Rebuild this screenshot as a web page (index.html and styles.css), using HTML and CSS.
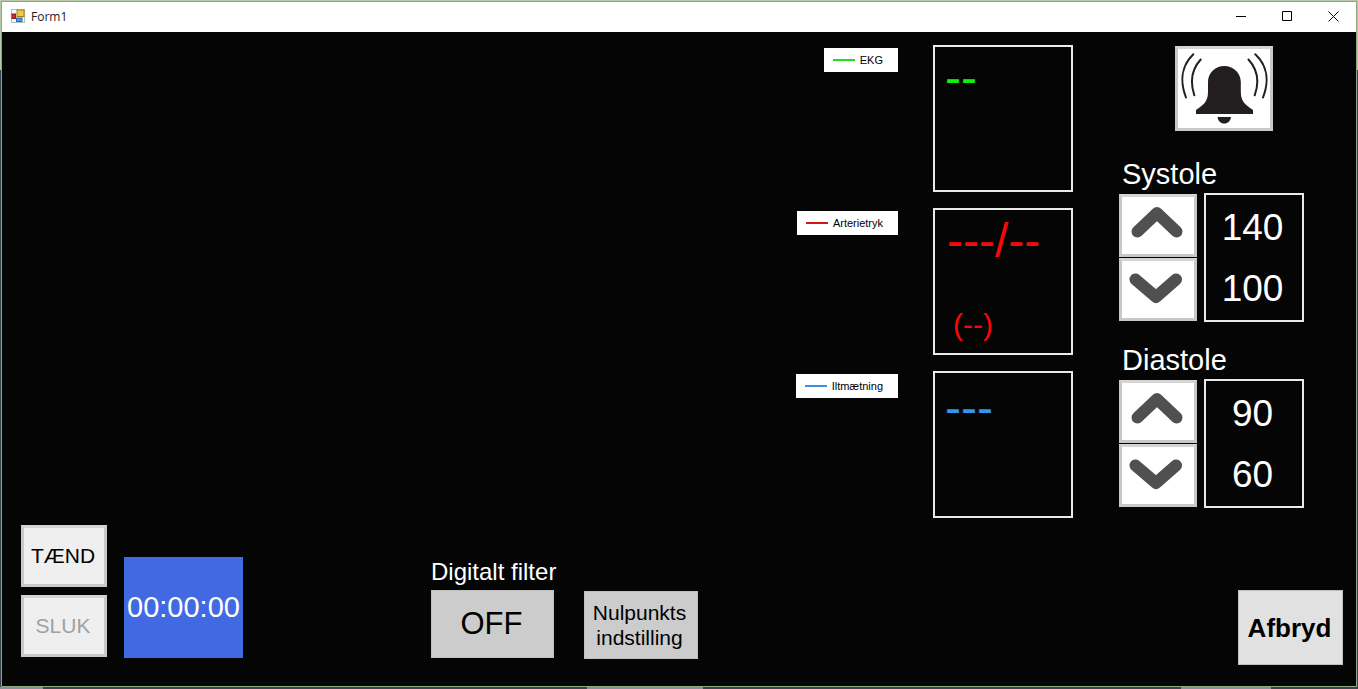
FILE: index.html
```html
<!DOCTYPE html>
<html lang="da">
<head>
<meta charset="utf-8">
<title>Form1</title>
<link rel="stylesheet" href="styles.css">
</head>
<body>
<div class="window">
  <header class="titlebar">
    <svg class="app-icon" viewBox="0 0 14 14" aria-hidden="true">
      <rect x="0.5" y="0.5" width="13" height="13" fill="#f4f8fa" stroke="#a9c0cb"/>
      <rect x="1" y="5" width="3.500" height="4.500" fill="#c8342f" stroke="#8c1a1a"/>
      <rect x="6" y="1" width="7" height="6.500" fill="#f5cb45" stroke="#a97c17"/>
      <rect x="5.500" y="9" width="5.500" height="3.500" fill="#5b95dc" stroke="#3568ad"/>
    </svg>
    <h1 class="title">Form1</h1>
    <div class="window-buttons">
      <button class="window-button" aria-label="Minimer"><svg viewBox="0 0 11 11"><path d="M0 5.500H10"/></svg></button>
      <button class="window-button" aria-label="Maksimer"><svg viewBox="0 0 11 11"><path d="M0.500 0.500H9.500V9.500H0.500Z"/></svg></button>
      <button class="window-button" aria-label="Luk"><svg viewBox="0 0 11 11"><path d="M0.500 0.500L10.500 10.500M10.500 0.500L0.500 10.500"/></svg></button>
    </div>
  </header>

  <main class="client">
    <div class="monitor">
      <div class="signals">
        <section class="signal ekg">
          <div class="legend"><span class="swatch"></span>EKG</div>
          <div class="reading"><span class="value">--</span></div>
        </section>
        <section class="signal pressure">
          <div class="legend"><span class="swatch"></span>Arterietryk</div>
          <div class="reading"><span class="value">---/--</span><span class="mean">(--)</span></div>
        </section>
        <section class="signal oxygen">
          <div class="legend"><span class="swatch"></span>Iltmætning</div>
          <div class="reading"><span class="value">---</span></div>
        </section>
      </div>

      <aside class="limits">
        <button class="raised alarm" aria-label="Alarm">
          <svg viewBox="3 3 92 79">
            <path fill="#231f20" d="M49.300 20C58.500 20 65.800 27 65.800 36V46C65.800 56 71 59 78 64V68H21V64C28 59 33 56 33 46V36C33 27 40 20 49.300 20ZM42.500 71H56C55.500 75 53 77.500 49.300 77.500S43 75 42.500 71Z"/>
            <path class="waves" d="M18.300 8.300C6 20 5 36 11 51.500M25.700 13.500C16 24 15 36 19.300 49.300M80.300 8.300C93 20 94 36 88 51.500M73.500 13.500C83 24 84.500 36 79.700 49.300"/>
          </svg>
        </button>

        <section class="limit">
          <h2 class="limit-name">Systole</h2>
          <div class="limit-row">
            <div class="steppers">
              <button class="raised stepper" aria-label="Systole op"><svg viewBox="3 3 72 57"><path d="M18.500 37.500L38 19L57.500 37.500"/></svg></button>
              <button class="raised stepper" aria-label="Systole ned"><svg viewBox="3 3 72 57"><path d="M16.500 21.500L37 39L57 21.500"/></svg></button>
            </div>
            <div class="limit-values"><output>140</output><output>100</output></div>
          </div>
        </section>

        <section class="limit">
          <h2 class="limit-name">Diastole</h2>
          <div class="limit-row">
            <div class="steppers">
              <button class="raised stepper" aria-label="Diastole op"><svg viewBox="3 3 72 57"><path d="M18.500 37.500L38 19L57.500 37.500"/></svg></button>
              <button class="raised stepper" aria-label="Diastole ned"><svg viewBox="3 3 72 57"><path d="M16.500 21.500L37 39L57 21.500"/></svg></button>
            </div>
            <div class="limit-values"><output>90</output><output>60</output></div>
          </div>
        </section>
      </aside>
    </div>

    <footer class="controls">
      <div class="power">
        <button class="raised power-button">TÆND</button>
        <button class="raised power-button" disabled>SLUK</button>
      </div>
      <output class="timer">00:00:00</output>
      <div class="filter">
        <label class="filter-name" for="filter">Digitalt filter</label>
        <button class="flat filter-button" id="filter">OFF</button>
      </div>
      <button class="flat zero-button">Nulpunkts indstilling</button>
      <button class="flat quit-button">Afbryd</button>
    </footer>
  </main>
</div>
</body>
</html>
```
FILE: styles.css
```css
* {
  box-sizing: border-box;
}

body {
  display: flex;
  min-height: 100vh;
  margin: 0;
  padding: 1px 1px 2px;
  font-family: "Liberation Sans", Arial, sans-serif;
  color: #fff;
  background:
    linear-gradient(#84919a, #84919a) 0 100% / 43px 2px no-repeat,
    linear-gradient(#84919a, #84919a) 47.3% 100% / 116px 2px no-repeat,
    linear-gradient(#84919a, #84919a) 93.1% 100% / 90px 2px no-repeat,
    linear-gradient(#b5c9a6 70px, #36434b 70px);
}

button {
  padding: 0;
  border: 0;
  font-family: inherit;
  color: #000;
}

svg {
  display: block;
}

.window {
  flex: 1;
  display: flex;
  flex-direction: column;
  border: 1px solid #8fa87e;
}

.titlebar {
  display: flex;
  align-items: flex-start;
  height: 30px;
  padding-left: 9px;
  background: #fff;
  color: #222;
}

.app-icon {
  width: 14px;
  height: 14px;
  margin: 7px 6px 0 0;
}

.title {
  flex: 1;
  margin: 0;
  font: 400 12px/29px "Open Sans", "Noto Sans", sans-serif;
}

.window-buttons {
  display: flex;
}

.window-button {
  display: grid;
  place-items: center;
  width: 46px;
  height: 29px;
  background: none;
}

.window-button svg {
  width: 11px;
  height: 11px;
  fill: none;
  stroke: #000;
}

.client {
  flex: 1;
  display: flex;
  flex-direction: column;
  justify-content: space-between;
  background: #050505;
}

.monitor {
  display: flex;
  gap: 46px;
  padding: 13px 52px 0 19px;
}

.signals {
  flex: 1;
  display: flex;
  flex-direction: column;
  gap: 16px;
}

.signal {
  display: flex;
  justify-content: flex-end;
  align-items: flex-start;
  gap: 35px;
}

.legend {
  display: flex;
  align-items: center;
  gap: 5px;
  height: 24px;
  margin-top: 3px;
  padding: 0 15px 0 9px;
  background: #fff;
  color: #000;
  font-size: 11px;
}

.swatch {
  width: 22px;
  height: 2px;
  background: currentColor;
}

.ekg .swatch {
  color: #22dd22;
}

.pressure .swatch {
  color: #d01818;
}

.oxygen .swatch {
  color: #3a8ee6;
}

.reading {
  display: flex;
  flex-direction: column;
  justify-content: space-between;
  width: 140px;
  height: 147px;
  padding: 6px 10px 12px;
  border: 2px solid #e8ebe8;
}

.value {
  font-size: 48px;
  line-height: 50px;
}

.mean {
  padding-left: 6px;
  font-size: 30px;
  line-height: 32px;
}

.ekg .reading {
  color: #10f010;
}

.pressure .reading {
  padding-left: 12px;
  color: #f80808;
}

.oxygen .reading {
  padding-top: 10px;
  color: #2f96f5;
}

.limits {
  display: flex;
  flex-direction: column;
  width: 185px;
}

.raised {
  border: 3px solid #c8c8c8;
  border-top-color: #d4d4d4;
  background: #fff;
}

.alarm {
  width: 98px;
  height: 85px;
  margin: 1px 0 26px 56px;
}

.waves {
  fill: none;
  stroke: #231f20;
  stroke-width: 2;
  stroke-linecap: round;
}

.limit + .limit {
  margin-top: 21px;
}

.limit-name {
  margin: 0;
  padding: 0 0 2px 3px;
  font-size: 29px;
  font-weight: 400;
  line-height: 34px;
}

.limit-row {
  display: flex;
  align-items: center;
  gap: 7px;
}

.steppers {
  display: grid;
  gap: 1px;
}

.stepper {
  width: 78px;
  height: 63px;
}

.stepper path {
  fill: none;
  stroke: #505050;
  stroke-width: 12;
  stroke-linecap: round;
  stroke-linejoin: round;
}

.limit-values {
  flex: 1;
  display: grid;
  height: 129px;
  padding: 3px 3px 1px 0;
  border: 2px solid #e8ebe8;
  font-size: 37px;
  text-align: center;
  align-items: center;
}

.controls {
  display: flex;
  align-items: flex-end;
  padding: 0 13px 28px 19px;
}

.power {
  display: grid;
  gap: 8px;
  padding-bottom: 1px;
}

.power-button {
  width: 86px;
  height: 62px;
  padding-right: 2px;
  background: #efefef;
  font-size: 21px;
}

.power-button:disabled {
  color: #a0a0a0;
}

.timer {
  display: grid;
  place-items: center;
  width: 119px;
  height: 101px;
  margin-left: 17px;
  background: #4169e1;
  font-size: 29px;
}

.filter {
  display: flex;
  flex-direction: column;
  width: 123px;
  margin-left: 188px;
}

.filter-name {
  font-size: 24px;
  line-height: 36px;
  white-space: nowrap;
}

.flat {
  border: 1px solid #c0c0c0;
  background: #ccc;
}

.filter-button {
  height: 68px;
  padding-right: 2px;
  font-size: 31px;
}

.zero-button {
  width: 114px;
  height: 68px;
  margin: 0 0 -1px 30px;
  padding-right: 3px;
  font-size: 21px;
  line-height: 25px;
}

.quit-button {
  width: 105px;
  height: 75px;
  margin: 0 0 -7px auto;
  padding: 2px 2px 0 0;
  background: #e1e1e1;
  font-size: 26px;
  font-weight: 700;
}
```
